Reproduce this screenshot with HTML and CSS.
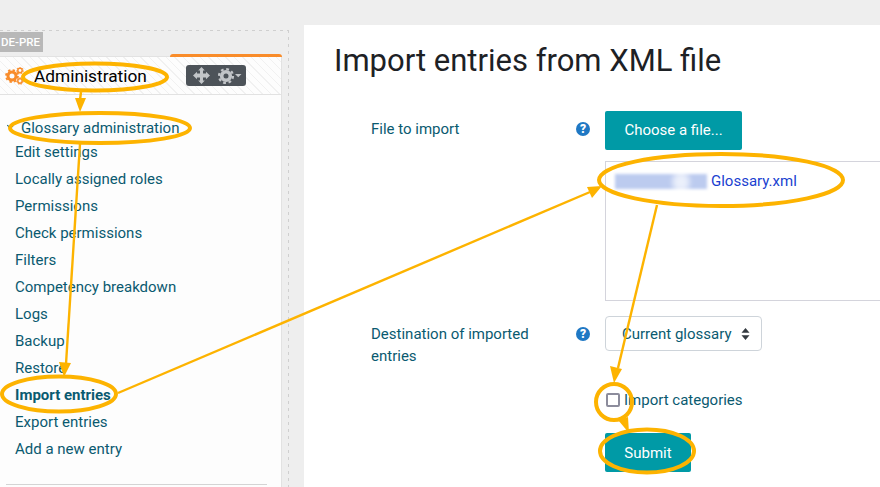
FILE: index.html
```html
<!DOCTYPE html>
<html lang="en">
<head>
<meta charset="utf-8">
<title>Import entries from XML file</title>
<link rel="stylesheet" href="styles.css">
</head>
<body>
<div class="page">
  <aside class="side">
    <div class="tag">DE-PRE</div>
    <section class="block">
      <div class="accent"></div>
      <header class="block-head">
        <svg class="gears" width="24" height="18" viewBox="0 0 24 18"><g fill="none" stroke="#f98c2a"><circle cx="7" cy="9" r="4" stroke-width="3"/><circle cx="7" cy="9" r="6" stroke-width="1.800" stroke-dasharray="2.400 2.300"/><circle cx="15" cy="3.500" r="2.200" stroke-width="1.500"/><circle cx="15" cy="3.500" r="3.300" stroke-width="1" stroke-dasharray="1.500 1.400"/><circle cx="15" cy="14" r="2.200" stroke-width="1.500"/><circle cx="15" cy="14" r="3.300" stroke-width="1" stroke-dasharray="1.500 1.400"/></g></svg>
        <h2 class="block-title">Administration</h2>
        <div class="block-tools">
          <svg width="17" height="17" viewBox="0 0 17 17"><path d="M8.500 0l3.300 3.500H10v3h3V4.700L17 8.500l-4 3.800V10.500h-3v3h1.800L8.500 17l-3.300-3.500H7v-3H4v1.800L0 8.500l4-3.800v1.800h3v-3H5.200z" fill="#c2c5c8"/></svg>
          <svg width="24" height="18" viewBox="0 0 24 18"><g fill="none" stroke="#c2c5c8"><circle cx="8" cy="9" r="4.300" stroke-width="3.600"/><circle cx="8" cy="9" r="7" stroke-width="2.200" stroke-dasharray="2.800 2.700"/></g><path d="M17 7h6.500l-3.250 3.200z" fill="#c2c5c8"/></svg>
        </div>
      </header>
      <div class="tree-root"><span class="chev"></span>Glossary administration</div>
      <ul class="tree">
        <li>Edit settings</li>
        <li>Locally assigned roles</li>
        <li>Permissions</li>
        <li>Check permissions</li>
        <li>Filters</li>
        <li>Competency breakdown</li>
        <li>Logs</li>
        <li>Backup</li>
        <li>Restore</li>
        <li class="current">Import entries</li>
        <li>Export entries</li>
        <li>Add a new entry</li>
      </ul>
      <div class="block-rule"></div>
    </section>
  </aside>
  <main class="main">
    <h1 class="title">Import entries from XML file</h1>
    <form class="form">
      <div class="row row-file">
        <div class="label">File to import</div>
        <div class="help">?</div>
        <div class="control">
          <div class="btn btn-file">Choose a file...</div>
          <div class="filebox"><span class="blurred"></span><a class="filelink">Glossary.xml</a></div>
        </div>
      </div>
      <div class="row row-dest">
        <div class="label">Destination of imported entries</div>
        <div class="help">?</div>
        <div class="control">
          <div class="select">Current glossary
            <svg width="9" height="14" viewBox="0 0 9 14"><path d="M4.500 1L8.500 5.800H.5zM4.500 13L.5 8.200h8z" fill="#343a40"/></svg>
          </div>
        </div>
      </div>
      <div class="row row-check">
        <label class="check"><span class="box"></span>Import categories</label>
      </div>
      <div class="row row-submit">
        <div class="btn btn-submit">Submit</div>
      </div>
    </form>
  </main>
</div>
<svg class="notes" width="880" height="487" viewBox="0 0 880 487">
  <g fill="none" stroke="#fdb300" stroke-width="4">
    <ellipse cx="95" cy="77" rx="72" ry="13.500"/>
    <ellipse cx="100" cy="128" rx="90" ry="15"/>
    <ellipse cx="59" cy="394" rx="57" ry="17.500"/>
    <ellipse cx="721" cy="180" rx="122" ry="26"/>
    <circle cx="614" cy="402" r="18"/>
    <ellipse cx="647" cy="451" rx="47" ry="21.500"/>
  </g>
  <g fill="none" stroke="#fdb300" stroke-width="2.400">
    <path d="M81 92L80 100"/>
    <path d="M80 144L66 364"/>
    <path d="M118 393L590 192"/>
    <path d="M657 205L618 368"/>
  </g>
  <g fill="#fdb300">
    <path d="M75 98L86 98L80 112z"/>
    <path d="M59 362L71 363L64 377z"/>
    <path d="M587 187L602 186L592 198z"/>
    <path d="M610 366L622 369L614 383z"/>
    <path d="M618 420L628 417L629 433z"/>
  </g>
</svg>
</body>
</html>
```
FILE: styles.css
```css
* { box-sizing: border-box; }
html, body { margin: 0; padding: 0; }
body {
  width: 880px;
  height: 487px;
  overflow: hidden;
  background: #eeeeee;
  font-family: Roboto, "Liberation Sans", sans-serif;
  font-size: 15px;
  color: #0a5a70;
  position: relative;
}
.page {
  display: flex;
  height: 487px;
  padding-top: 25px;
}
.side {
  width: 304px;
  flex: none;
  margin-top: 5px;
  padding-top: 2px;
  height: 457px;
  background-image:
    repeating-linear-gradient(90deg, #cfcfcf 0 3px, transparent 3px 7px),
    repeating-linear-gradient(180deg, #cfcfcf 0 3px, transparent 3px 7px);
  background-size: 289px 1px, 1px 100%;
  background-position: 0 0, 288px 0;
  background-repeat: no-repeat;
}
.tag {
  width: 43px;
  height: 20px;
  padding-left: 1px;
  background: #b8b8b8;
  color: #fff;
  font-size: 11.500px;
  font-weight: 500;
  line-height: 20px;
  white-space: nowrap;
  overflow: hidden;
}
.block {
  position: relative;
  margin-top: 4px;
  width: 282px;
  height: 440px;
  background: #fdfdfd;
  border-top: 1px solid #e2e2e2;
  border-right: 1px solid #e2e2e2;
}
.accent {
  position: absolute;
  left: 170px;
  right: -1px;
  top: -3px;
  height: 3px;
  background: #f98c2a;
  border-radius: 3px 3px 0 0;
}
.block-head {
  display: flex;
  align-items: center;
  height: 38px;
  padding-left: 5px;
  border-bottom: 1px solid #e2e2e2;
  background: repeating-linear-gradient(45deg, #fdfdfd 0, #fdfdfd 5px, #f1f1f1 5px, #f1f1f1 6px);
}
.gears { flex: none; margin-right: 5px; }
.block-title {
  margin: 0;
  font-size: 17.300px;
  font-weight: 400;
  color: #000;
  width: 152px;
}
.block-tools {
  display: flex;
  align-items: center;
  gap: 8px;
  width: 60px;
  height: 21px;
  padding-left: 7px;
  background: #4d5359;
  border-radius: 3px;
}
.tree-root {
  position: relative;
  margin-top: 23px;
  padding-left: 21px;
  height: 20px;
  line-height: 20px;
}
.chev {
  position: absolute;
  left: 8px;
  top: 5px;
  width: 5px;
  height: 5px;
  border-right: 1px solid #0a5a70;
  border-bottom: 1px solid #0a5a70;
  transform: rotate(45deg);
}
.tree {
  list-style: none;
  margin: 1px 0 0;
  padding: 0 0 0 15px;
}
.tree li {
  height: 27px;
  line-height: 27px;
}
.tree .current { font-weight: 700; }
.block-rule {
  margin: 21px 0 0 6px;
  width: 261px;
  border-top: 1px solid #d4d4d4;
}
.main {
  flex: 1;
  background: #fff;
  padding: 0 0 0 30px;
  min-width: 0;
}
.title {
  margin: 17px 0 0;
  font-size: 31px;
  font-weight: 400;
  line-height: 38px;
  color: #1d2125;
}
.form { margin-top: 31px; }
.row { display: flex; }
.label {
  flex: none;
  width: 205px;
  margin-left: 37px;
  padding-right: 20px;
  line-height: 22px;
  padding-top: 7px;
}
.help {
  flex: none;
  width: 14px;
  height: 14px;
  margin-top: 11px;
  margin-right: 15px;
  border-radius: 50%;
  background: #1f78c4;
  color: #fff;
  font-size: 12px;
  font-weight: 900;
  line-height: 14px;
  text-align: center;
}
.control { flex: 1; min-width: 0; }
.btn {
  height: 39px;
  background: #009aa6;
  color: #fff;
  line-height: 39px;
  text-align: center;
  border-radius: 2px;
}
.btn-file { width: 137px; }
.filebox {
  display: flex;
  align-items: center;
  margin-top: 11px;
  width: 290px;
  height: 140px;
  border: 1px solid #d4d4dc;
  border-right: 0;
  padding: 0 0 100px 9px;
}
.blurred {
  width: 92px;
  height: 15px;
  margin-right: 4px;
  background: radial-gradient(ellipse 12px 14px at 66px 8px, #eef2fc 0, #e6ecfa 45%, rgba(188, 203, 239, 0) 100%), #bccbef;
  filter: blur(1.500px);
}
.filelink { color: #1a3fd0; font-size: 15px; }
.row-dest { margin-top: 15px; height: 35px; }
.select {
  display: flex;
  align-items: center;
  justify-content: space-between;
  width: 157px;
  height: 35px;
  padding: 0 11px 0 16px;
  border: 1px solid #ced4da;
  border-radius: 4px;
  background: #fff;
}
.row-check { margin: 38px 0 0 271px; height: 22px; }
.check {
  display: flex;
  align-items: center;
  gap: 4px;
  line-height: 22px;
}
.box {
  width: 14px;
  height: 14px;
  margin-left: 1px;
  border: 2px solid #8c8c9c;
  border-radius: 2px;
  background: #fff;
}
.row-submit { margin: 22px 0 0 271px; }
.btn-submit { width: 86px; line-height: 40px; }
.notes {
  position: absolute;
  left: 0;
  top: 0;
  pointer-events: none;
}
```
